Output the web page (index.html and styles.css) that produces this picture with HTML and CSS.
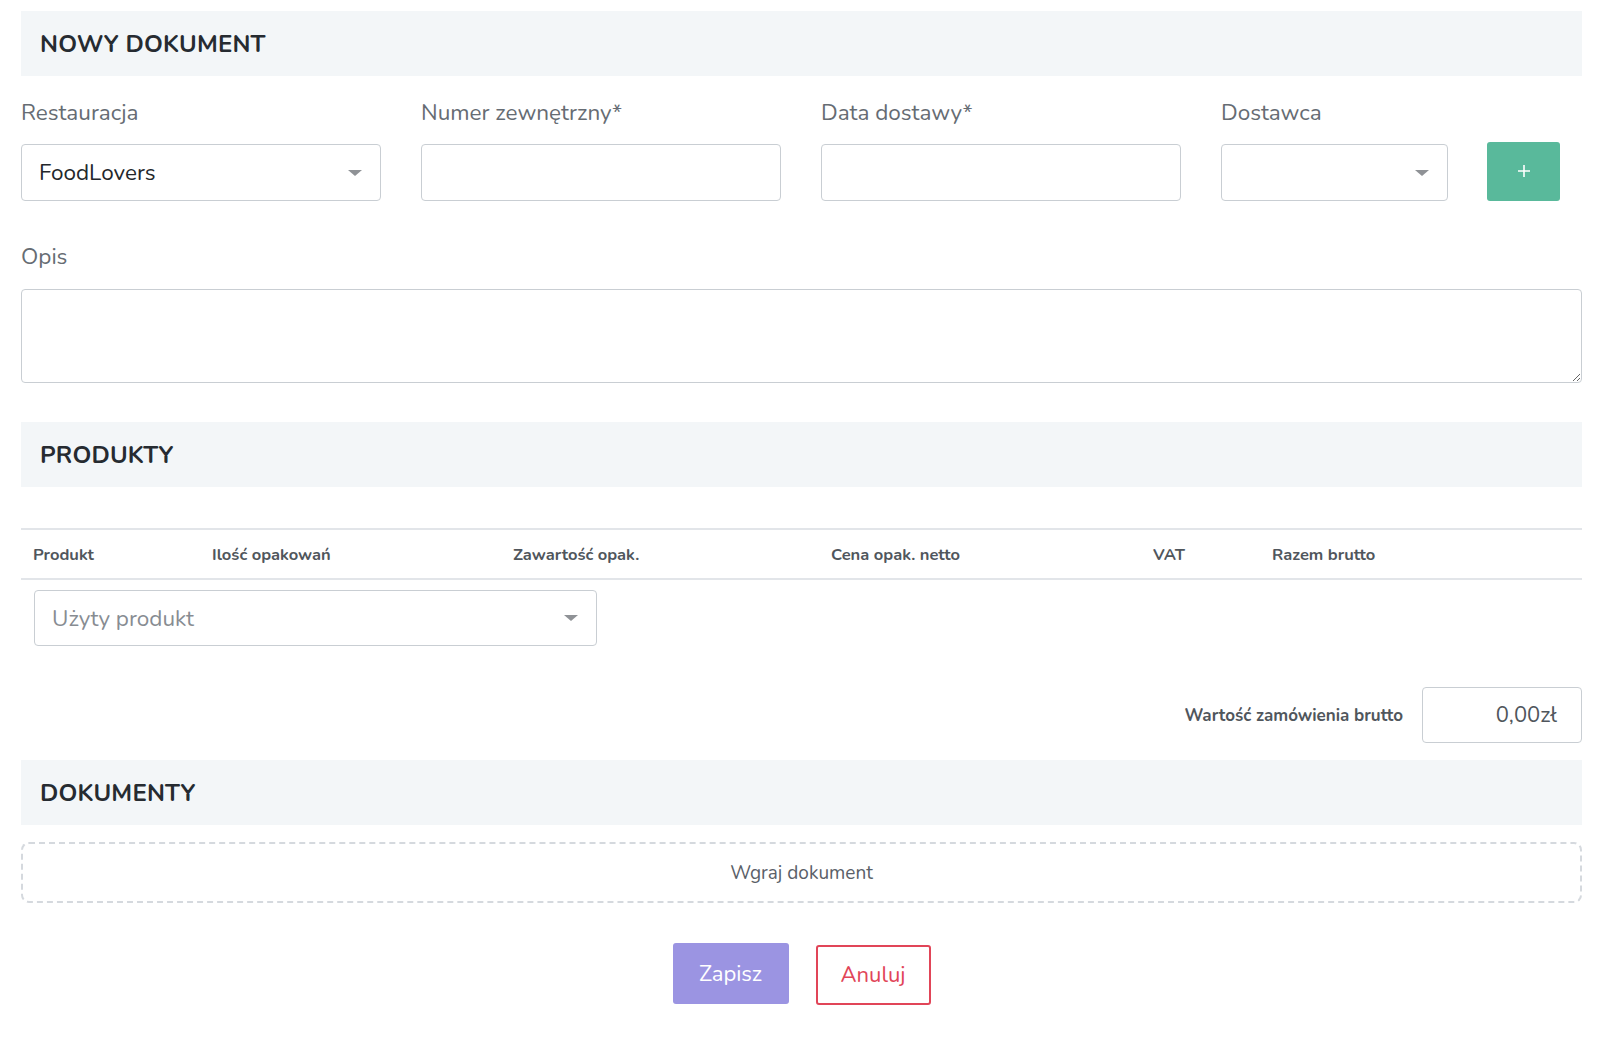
FILE: index.html
```html
<!DOCTYPE html>
<html lang="pl">
<head>
  <meta charset="UTF-8" />
  <title>Nowy dokument</title>
  <link rel="stylesheet" href="styles.css">
</head>
<body>
  <div class="page">
    <div class="section-title">NOWY DOKUMENT</div>

    <div class="field-row">
      <div class="field">
        <label>Restauracja</label>
        <div class="select">
          <span>FoodLovers</span>
          <span class="caret"></span>
        </div>
      </div>
      <div class="field">
        <label>Numer zewnętrzny*</label>
        <input class="input" type="text" />
      </div>
      <div class="field">
        <label>Data dostawy*</label>
        <input class="input" type="text" />
      </div>
      <div class="field">
        <label>Dostawca</label>
        <div class="supplier">
          <div class="select supplier-select">
            <span></span>
            <span class="caret"></span>
          </div>
          <button class="add-btn">
            <svg width="14" height="14" viewBox="0 0 14 14">
              <path d="M7 1v12M1 7h12" stroke="#fff" stroke-width="1.6" />
            </svg>
          </button>
        </div>
      </div>
    </div>

    <div class="field desc">
      <label>Opis</label>
      <textarea class="textarea"></textarea>
    </div>

    <div class="section-title products-title">PRODUKTY</div>

    <table class="products">
      <colgroup>
        <col class="c-prod"><col class="c-qty"><col class="c-content"><col class="c-price"><col class="c-vat"><col>
      </colgroup>
      <thead>
        <tr>
          <th>Produkt</th>
          <th>Ilość opakowań</th>
          <th>Zawartość opak.</th>
          <th>Cena opak. netto</th>
          <th>VAT</th>
          <th>Razem brutto</th>
        </tr>
      </thead>
    </table>

    <div class="product-pick">
      <div class="select product-select">
        <span class="placeholder">Użyty produkt</span>
        <span class="caret"></span>
      </div>
    </div>

    <div class="total-row">
      <span class="total-label">Wartość zamówienia brutto</span>
      <div class="total-value">0,00zł</div>
    </div>

    <div class="section-title docs-title">DOKUMENTY</div>

    <div class="dropzone">Wgraj dokument</div>

    <div class="actions">
      <button class="btn-save">Zapisz</button>
      <button class="btn-cancel">Anuluj</button>
    </div>
  </div>
</body>
</html>
```

FILE: styles.css
```css
body { margin: 0; font-family: "Nunito", "Lato", "Open Sans", sans-serif; background: #fff; color: #2b3036; }

.page {
  width: 1561px;
  padding: 11px 0 0 21px;
}

.section-title {
  background-color: #f3f6f8;
  height: 65px;
  padding: 0 19px;
  display: flex;
  align-items: center;
  font-size: 24px;
  font-weight: bold;
  color: #262b31;
  letter-spacing: 0.2px;
}

.field-row {
  display: grid;
  grid-template-columns: repeat(4, 360px);
  gap: 40px;
  margin-top: 25px;
}

.field label {
  display: block;
  font-size: 22.5px;
  line-height: 24px;
  color: #666c73;
  margin-bottom: 19px;
}

.select, .input {
  box-sizing: border-box;
  height: 57px;
  border: 1px solid #c9ced3;
  border-radius: 4px;
  background: #fff;
}

.input { width: 100%; display: block; }

.select {
  display: flex;
  align-items: center;
  justify-content: space-between;
  padding: 0 18px 0 17px;
  font-size: 22.5px;
  color: #23272b;
}

.caret {
  width: 0;
  height: 0;
  border-left: 7px solid transparent;
  border-right: 7px solid transparent;
  border-top: 6px solid #8f9296;
}

.supplier {
  display: flex;
  align-items: center;
  gap: 39px;
}

.supplier-select { width: 227px; }

.add-btn {
  width: 73px;
  height: 59px;
  margin-top: -3px;
  border: none;
  border-radius: 3px;
  background-color: #59b99b;
  display: flex;
  align-items: center;
  justify-content: center;
}

.desc { margin-top: 44px; }
.desc label { margin-bottom: 20px; }

.textarea {
  display: block;
  box-sizing: border-box;
  width: 100%;
  height: 94px;
  border: 1px solid #c9ced3;
  border-radius: 4px;
}

.products-title { margin-top: 39px; }

.products {
  width: 100%;
  margin-top: 41px;
  border-collapse: collapse;
  table-layout: fixed;
}

.products th {
  text-align: left;
  font-size: 16.5px;
  font-weight: bold;
  color: #50565c;
  padding: 0 12px;
  height: 48px;
  border-top: 2px solid #e2e5e9;
  border-bottom: 2px solid #e2e5e9;
}

.c-prod { width: 179px; }
.c-qty { width: 301px; }
.c-content { width: 318px; }
.c-price { width: 322px; }
.c-vat { width: 119px; }

.product-pick { padding: 10px 0 0 13px; }

.product-select { width: 563px; height: 56px; }
.placeholder { color: #878c92; }

.total-row {
  display: flex;
  justify-content: flex-end;
  align-items: center;
  gap: 19px;
  margin-top: 41px;
}

.total-label { font-size: 17px; font-weight: bold; color: #50565c; }

.total-value {
  box-sizing: border-box;
  width: 160px;
  height: 56px;
  border: 1px solid #c9ced3;
  border-radius: 4px;
  display: flex;
  align-items: center;
  justify-content: flex-end;
  padding-right: 24px;
  font-size: 22px;
  color: #50565c;
}

.docs-title { margin-top: 17px; }

.dropzone {
  box-sizing: border-box;
  height: 61px;
  margin-top: 17px;
  border: 2px dashed #d5d9de;
  border-radius: 8px;
  display: flex;
  align-items: center;
  justify-content: center;
  font-size: 19px;
  color: #5a6068;
}

.actions {
  display: flex;
  justify-content: center;
  align-items: flex-start;
  gap: 27px;
  margin-top: 40px;
}

.actions button {
  font-family: inherit;
  font-size: 22px;
  border-radius: 3px;
  cursor: pointer;
}

.btn-save {
  width: 116px;
  height: 61px;
  border: none;
  background-color: #9b94e2;
  color: #fff;
}

.btn-cancel {
  width: 115px;
  height: 60px;
  margin-top: 2px;
  border: 2px solid #e14558;
  background: #fff;
  color: #e14558;
}
```
